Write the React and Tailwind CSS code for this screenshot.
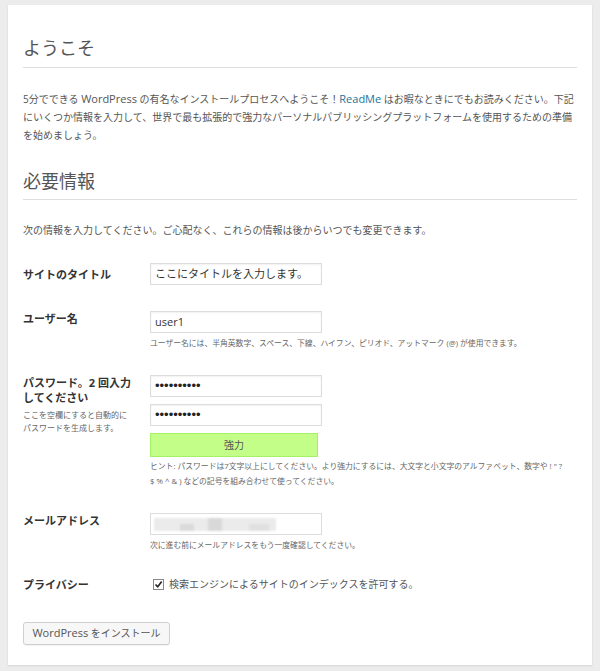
const font = { fontFamily: '"Open Sans", "Noto Sans CJK JP", sans-serif' };

function Row({ label, sub, children, className = '' }) {
  return (
    <div className={`flex ${className}`}>
      <div className="w-[127px] shrink-0">
        <div className="text-[11px] leading-[15px] font-bold text-[#333]">{label}</div>
        {sub && <div className="mt-[3px] text-[8px] leading-[13px] text-[#666]">{sub}</div>}
      </div>
      <div className="flex flex-col">{children}</div>
    </div>
  );
}

function Field({ value, className = '', dots }) {
  return (
    <div
      className={`w-[172px] h-[22px] border border-[#dcdcdc] bg-white flex items-center px-[4px] text-[#333] ${className}`}
      style={{ boxShadow: 'inset 0 1px 2px rgba(0,0,0,0.06)' }}
    >
      {dots ? (
        <span className="text-[13px] text-[#222]" style={{ fontFamily: '"Liberation Sans", sans-serif' }}>
          ••••••••••
        </span>
      ) : (
        <span className="text-[11px]">{value}</span>
      )}
    </div>
  );
}

export default function App() {
  return (
    <div className="w-[600px] h-[671px] bg-[#ececec] pt-[5px] pl-[8px]" style={font}>
      <div className="w-[584px] h-[660px] bg-white px-[15px] shadow-[0_1px_2px_rgba(0,0,0,0.1)]">
        <h1 className="pt-[30px] pb-[6px] text-[18px] leading-[26px] text-[#555] border-b border-[#dedede]">
          ようこそ
        </h1>
        <p className="mt-[22px] text-[10px] leading-[18px] text-[#555] whitespace-nowrap">
          5分でできる <span className="text-[11px]">WordPress</span> の有名なインストールプロセスへようこそ！
          <span className="text-[11px] text-[#21759b]">ReadMe</span> はお暇なときにでもお読みください。下記
          <br />
          にいくつか情報を入力して、世界で最も拡張的で強力なパーソナルパブリッシングプラットフォームを使用するための準備
          <br />
          を始めましょう。
        </p>
        <h2 className="mt-[24px] pb-[5px] text-[18px] leading-[26px] text-[#555] border-b border-[#dedede]">
          必要情報
        </h2>
        <p className="mt-[21px] text-[10px] leading-[18px] text-[#555]">
          次の情報を入力してください。ご心配なく、これらの情報は後からいつでも変更できます。
        </p>

        <Row label="サイトのタイトル" className="mt-[24px] items-center">
          <Field value="ここにタイトルを入力します。" />
        </Row>

        <Row label="ユーザー名" className="mt-[26px]">
          <Field value="user1" />
          <div className="mt-[4px] text-[7.8px] leading-[13px] text-[#666] whitespace-nowrap">
            ユーザー名には、半角英数字、スペース、下線、ハイフン、ピリオド、アットマーク (@) が使用できます。
          </div>
        </Row>

        <Row
          label={<>パスワード。2 回入力<br />してください</>}
          sub={<>ここを空欄にすると自動的に<br />パスワードを生成します。</>}
          className="mt-[25px]"
        >
          <Field dots />
          <Field dots className="mt-[7px]" />
          <div className="mt-[7px] w-[168px] h-[24px] bg-[#c3ff88] border border-[#a5f064] flex items-center justify-center text-[10px] text-[#555]">
            強力
          </div>
          <div className="mt-[2px] text-[7.8px] leading-[15px] text-[#666] whitespace-nowrap">
            ヒント: パスワードは7文字以上にしてください。より強力にするには、大文字と小文字のアルファベット、数字や ! " ?
            <br />$ % ^ &amp; ) などの記号を組み合わせて使ってください。
          </div>
        </Row>

        <Row label="メールアドレス" className="mt-[24px]">
          <div className="w-[172px] h-[22px] border border-[#dcdcdc] bg-white flex items-center px-[3px]">
            <div className="relative w-[122px] h-[13px] bg-[#ebebeb] blur-[1px]">
              <div className="absolute left-[26px] top-[6px] w-[14px] h-[7px] bg-[#dadada]" />
              <div className="absolute left-[54px] top-0 w-[14px] h-[13px] bg-[#d8d8d8]" />
              <div className="absolute left-[95px] top-[6px] w-[20px] h-[7px] bg-[#e0e0e0]" />
            </div>
          </div>
          <div className="mt-[4px] text-[7.8px] leading-[13px] text-[#666]">
            次に進む前にメールアドレスをもう一度確認してください。
          </div>
        </Row>

        <Row label="プライバシー" className="mt-[25px] items-center">
          <label className="flex items-center gap-[5px] text-[10px] text-[#555]">
            <span className="ml-[3px] w-[11px] h-[11px] border border-[#888] bg-white flex items-center justify-center">
              <svg width="9" height="9" viewBox="0 0 9 9">
                <path d="M1.5 4.5 L3.7 6.8 L7.7 1.5" fill="none" stroke="#222" strokeWidth="1.6" />
              </svg>
            </span>
            検索エンジンによるサイトのインデックスを許可する。
          </label>
        </Row>

        <button className="mt-[30px] w-[147px] h-[23px] border border-[#cfcfcf] rounded-[3px] bg-[#f7f7f7] text-[10px] text-[#555] shadow-[0_1px_0_rgba(0,0,0,0.05)]">
          <span className="text-[11px]">WordPress</span> をインストール
        </button>
      </div>
    </div>
  );
}
